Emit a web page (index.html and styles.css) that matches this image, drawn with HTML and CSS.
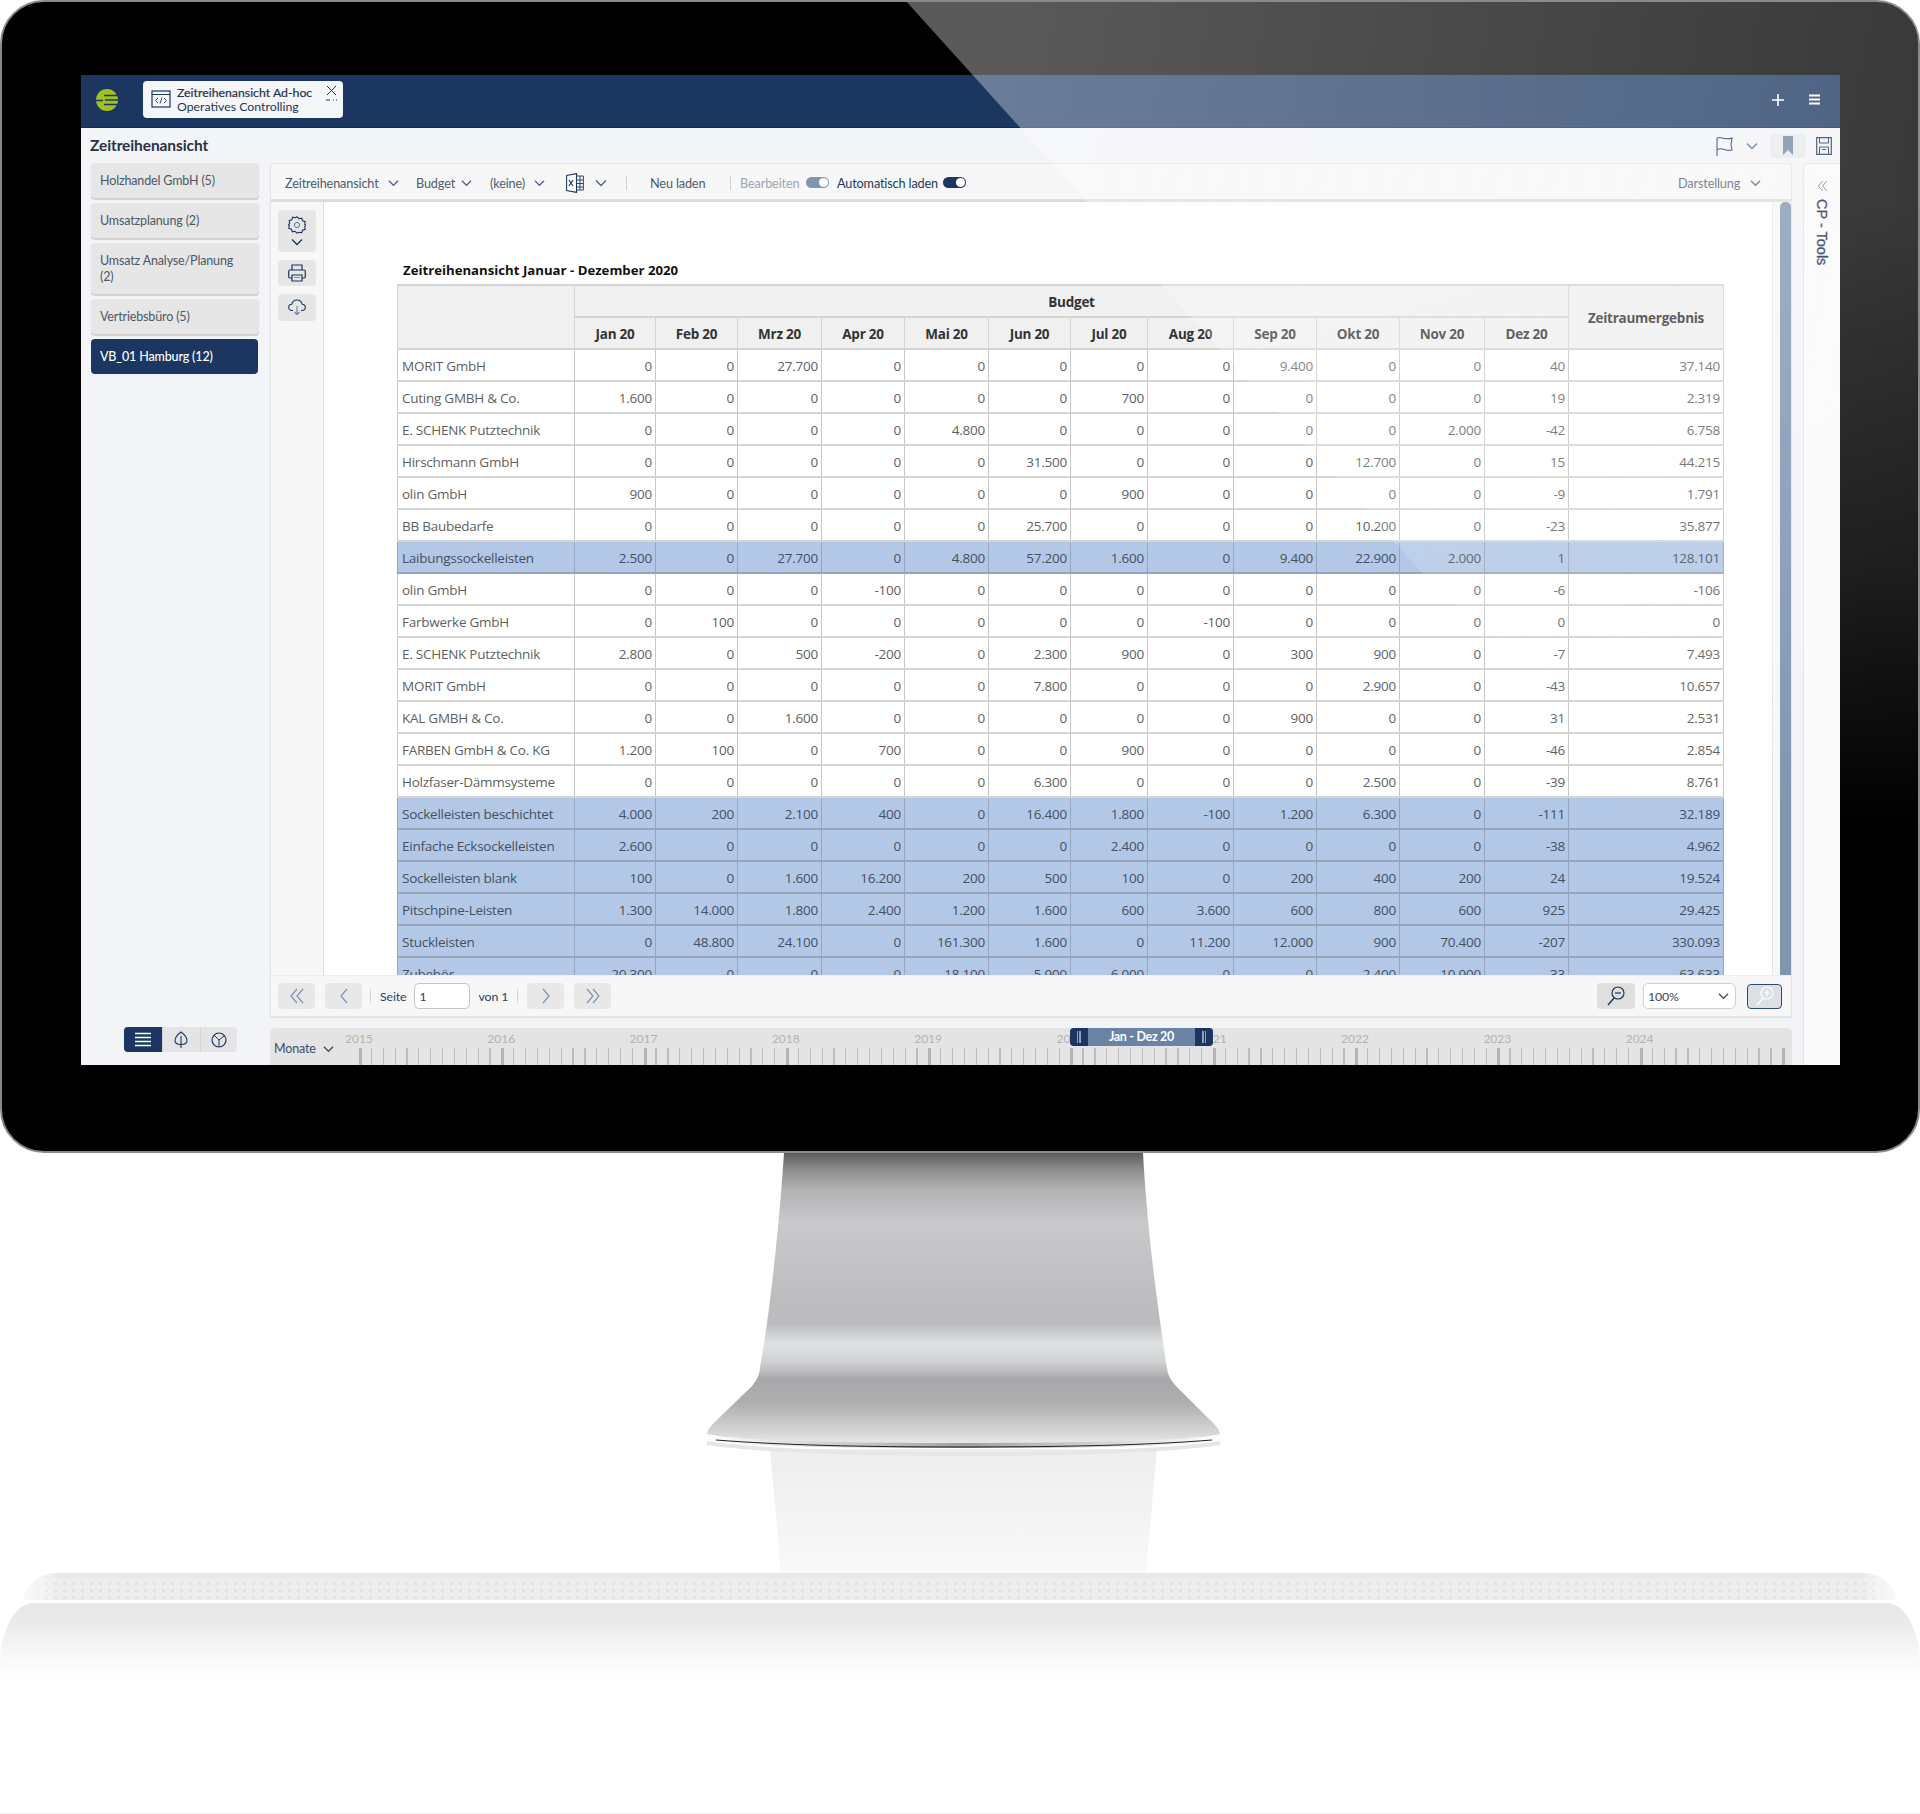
FILE: index.html
```html
<!DOCTYPE html>
<html lang="de">
<head>
    <meta charset="UTF-8">
    <meta name="viewport" content="width=device-width, initial-scale=1.0">
    <title>Zeitreihenansicht</title>
    <link rel="stylesheet" href="styles.css">
</head>
<body>
<svg class="defs" width="0" height="0">
    <symbol id="chev" viewBox="0 0 12 8"><path d="M1 1.500 6 6.500 11 1.500" fill="none" stroke="currentColor" stroke-width="1.300"/></symbol>
    <symbol id="left" viewBox="0 0 10 16"><path d="M8 1 2 8l6 7" fill="none" stroke="currentColor" stroke-width="1.200"/></symbol>
    <symbol id="right" viewBox="0 0 10 16"><path d="M2 1l6 7-6 7" fill="none" stroke="currentColor" stroke-width="1.200"/></symbol>
    <symbol id="dleft" viewBox="0 0 16 16"><path d="M8 1 2 8l6 7M14 1 8 8l6 7" fill="none" stroke="currentColor" stroke-width="1.200"/></symbol>
    <symbol id="dright" viewBox="0 0 16 16"><path d="M2 1l6 7-6 7M8 1l6 7-6 7" fill="none" stroke="currentColor" stroke-width="1.200"/></symbol>
</svg>

<div class="page">
    <div class="monitor">
        <div class="screen">
            <header class="topbar">
                <svg class="logo" width="24" height="24" viewBox="0 0 24 24">
                    <circle cx="12" cy="12" r="11" fill="#a2c31c"/>
                    <path d="M9 7.500H24M1 12.500H8M10 12H24M9 16.500H24" stroke="#1b3660" stroke-width="1.600"/>
                </svg>
                <div class="tab">
                    <svg class="tab-icon" width="20" height="18" viewBox="0 0 20 18">
                        <rect x="1" y="1" width="18" height="16" fill="none" stroke="#1b3660" stroke-width="1.200"/>
                        <path d="M1 4.500H19" stroke="#1b3660" stroke-width="1"/>
                        <path d="M7 8 4.500 10.500 7 13M13 8l2.500 2.500L13 13M11 7.500 9 13.500" fill="none" stroke="#1b3660" stroke-width=".9"/>
                    </svg>
                    <div class="tab-text">
                        <strong>Zeitreihenansicht Ad-hoc</strong>
                        <span>Operatives Controlling</span>
                    </div>
                    <svg class="tab-close" width="11" height="16" viewBox="0 0 11 16">
                        <path d="M1 1l9 9M10 1 1 10" stroke="#1b3660" stroke-width="1"/>
                        <path d="M0 15H4M7 15H8M10 15H11" stroke="#1b3660" stroke-width="1"/>
                    </svg>
                </div>
                <svg class="top-plus" width="12" height="12" viewBox="0 0 12 12"><path d="M6 0V12M0 6H12" stroke="#fff" stroke-width="1.600"/></svg>
                <svg class="top-menu" width="11" height="11" viewBox="0 0 11 11"><path d="M0 1.500H11M0 5.500H11M0 9.500H11" stroke="#fff" stroke-width="2"/></svg>
            </header>

            <div class="workspace">
                <div class="titlebar">
                    <h1>Zeitreihenansicht</h1>
                    <div class="title-actions">
                        <svg class="flag" width="17" height="20" viewBox="0 0 17 20"><path d="M1 20V2C5-.5 8 5 16 2L15 8.500 16 14C9 16 6 10 1 14" fill="none" stroke="#1b3660" stroke-width="1.100"/></svg>
                        <svg class="flag-chev" width="12" height="8"><use href="#chev"/></svg>
                        <div class="mark-btn"><svg width="10" height="19" viewBox="0 0 10 19"><path d="M0 0H10V19L5 14 0 19Z" fill="#6f87a7"/></svg></div>
                        <svg class="save" width="16" height="18" viewBox="0 0 16 18"><path d="M.7.7H15.300V17.300H.7Z" fill="#eef0f4" stroke="#1b3660" stroke-width="1.200"/><path d="M3.500 1V6H12.500V1M3.500 17V10H12.500V17M6 12.500H10" fill="none" stroke="#1b3660" stroke-width="1"/></svg>
                    </div>
                </div>

                <nav class="sidebar">
                    <a class="side-item">Holzhandel GmbH (5)</a>
                    <a class="side-item">Umsatzplanung (2)</a>
                    <a class="side-item side-tall">Umsatz Analyse/Planung (2)</a>
                    <a class="side-item">Vertriebsbüro (5)</a>
                    <a class="side-item active">VB_01 Hamburg (12)</a>
                </nav>

                <main class="panel">
                    <div class="toolbar">
                        <span class="tb-item tb-view">Zeitreihenansicht<svg width="11" height="8"><use href="#chev"/></svg></span>
                        <span class="tb-item tb-budget">Budget<svg width="11" height="8"><use href="#chev"/></svg></span>
                        <span class="tb-item tb-none">(keine)<svg width="11" height="8"><use href="#chev"/></svg></span>
                        <span class="tb-item tb-excel">
                            <svg width="18" height="20" viewBox="0 0 18 20"><path d="M.6 2.500 10.500.6V19.400L.6 17.500Z" fill="#fff" stroke="#1b3660" stroke-width="1.100"/><path d="M3 7l4 6M7 7l-4 6" stroke="#1b3660" stroke-width="1.200"/><path d="M10.500 3H17.400V17H10.500M14 3V17M10.500 7H17M10.500 10.500H17M10.500 14H17" fill="none" stroke="#1b3660" stroke-width=".9"/></svg>
                            <svg width="12" height="8"><use href="#chev"/></svg>
                        </span>
                        <i class="tb-sep sep-a"></i>
                        <span class="tb-item tb-reload">Neu laden</span>
                        <i class="tb-sep sep-b"></i>
                        <span class="tb-item tb-edit">Bearbeiten<b class="toggle off"></b></span>
                        <span class="tb-item tb-auto">Automatisch laden<b class="toggle"></b></span>
                        <span class="tb-item tb-display">Darstellung<svg width="11" height="8"><use href="#chev"/></svg></span>
                    </div>

                    <div class="panel-body">
                        <div class="side-tools">
                            <div class="tool-btn tool-gear">
                                <svg width="18" height="18" viewBox="0 0 18 18"><path d="M9 .8l2 1.900 2.700-.5.9 2.600 2.600.9-.5 2.700L18 9l-1.300 1.600.5 2.700-2.600.9-.9 2.600-2.700-.5L9 17.200l-2-1.900-2.700.5-.9-2.600-2.600-.9.5-2.700L.4 9l1.300-1.600-.5-2.700 2.600-.9.9-2.600 2.700.5Z" fill="none" stroke="#1b3660" stroke-width="1.100"/><circle cx="9" cy="9" r="2.600" fill="none" stroke="#5f7896" stroke-width="1"/></svg>
                                <svg width="12" height="8"><use href="#chev"/></svg>
                            </div>
                            <div class="tool-btn tool-print">
                                <svg width="18" height="18" viewBox="0 0 18 18"><path d="M4 6V1H14V6M4 14H2C1 14 .7 13.500 .7 12.500V7.500C.7 6.500 1 6 2 6H16C17 6 17.300 6.500 17.300 7.500V12.500C17.300 13.500 17 14 16 14H14" fill="none" stroke="#1b3660" stroke-width="1.200"/><path d="M4 11H14V17H4Z" fill="none" stroke="#1b3660" stroke-width="1.200"/><path d="M6 13.500H12" stroke="#7d93b0" stroke-width="1"/></svg>
                            </div>
                            <div class="tool-btn tool-cloud">
                                <svg width="18" height="17" viewBox="0 0 18 17"><path d="M5 11.500H4C2 11.500 .7 10 .7 8.300 .7 6.500 2 5.200 3.800 5.200 4.500 2.500 6.500 1 9 1s4.500 1.500 5.200 4.200C16 5.200 17.300 6.500 17.300 8.300 17.300 10 16 11.500 14 11.500H13" fill="none" stroke="#1b3660" stroke-width="1.100"/><path d="M9 7V15.500M6.500 13 9 15.500 11.500 13" fill="none" stroke="#6b83a5" stroke-width="1.100"/></svg>
                            </div>
                        </div>

                        <div class="report">
                            <h2>Zeitreihenansicht Januar - Dezember 2020</h2>
                            <table class="grid">
                                <colgroup>
                                    <col class="c-name"><col class="c81"><col class="c82"><col class="c84"><col class="c83"><col class="c84"><col class="c82"><col class="c77"><col class="c86"><col class="c83"><col class="c83"><col class="c85"><col class="c84"><col class="c-total">
                                </colgroup>
                                <thead>
                                    <tr><th rowspan="2"></th><th colspan="12">Budget</th><th rowspan="2">Zeitraumergebnis</th></tr>
                                    <tr><th>Jan 20</th><th>Feb 20</th><th>Mrz 20</th><th>Apr 20</th><th>Mai 20</th><th>Jun 20</th><th>Jul 20</th><th>Aug 20</th><th>Sep 20</th><th>Okt 20</th><th>Nov 20</th><th>Dez 20</th></tr>
                                </thead>
                                <tbody>
                                    <tr><td>MORIT GmbH</td><td>0</td><td>0</td><td>27.700</td><td>0</td><td>0</td><td>0</td><td>0</td><td>0</td><td>9.400</td><td>0</td><td>0</td><td>40</td><td>37.140</td></tr>
                                    <tr><td>Cuting GMBH &amp; Co.</td><td>1.600</td><td>0</td><td>0</td><td>0</td><td>0</td><td>0</td><td>700</td><td>0</td><td>0</td><td>0</td><td>0</td><td>19</td><td>2.319</td></tr>
                                    <tr><td>E. SCHENK Putztechnik</td><td>0</td><td>0</td><td>0</td><td>0</td><td>4.800</td><td>0</td><td>0</td><td>0</td><td>0</td><td>0</td><td>2.000</td><td>-42</td><td>6.758</td></tr>
                                    <tr><td>Hirschmann GmbH</td><td>0</td><td>0</td><td>0</td><td>0</td><td>0</td><td>31.500</td><td>0</td><td>0</td><td>0</td><td>12.700</td><td>0</td><td>15</td><td>44.215</td></tr>
                                    <tr><td>olin GmbH</td><td>900</td><td>0</td><td>0</td><td>0</td><td>0</td><td>0</td><td>900</td><td>0</td><td>0</td><td>0</td><td>0</td><td>-9</td><td>1.791</td></tr>
                                    <tr><td>BB Baubedarfe</td><td>0</td><td>0</td><td>0</td><td>0</td><td>0</td><td>25.700</td><td>0</td><td>0</td><td>0</td><td>10.200</td><td>0</td><td>-23</td><td>35.877</td></tr>
                                    <tr class="sum"><td>Laibungssockelleisten</td><td>2.500</td><td>0</td><td>27.700</td><td>0</td><td>4.800</td><td>57.200</td><td>1.600</td><td>0</td><td>9.400</td><td>22.900</td><td>2.000</td><td>1</td><td>128.101</td></tr>
                                    <tr><td>olin GmbH</td><td>0</td><td>0</td><td>0</td><td>-100</td><td>0</td><td>0</td><td>0</td><td>0</td><td>0</td><td>0</td><td>0</td><td>-6</td><td>-106</td></tr>
                                    <tr><td>Farbwerke GmbH</td><td>0</td><td>100</td><td>0</td><td>0</td><td>0</td><td>0</td><td>0</td><td>-100</td><td>0</td><td>0</td><td>0</td><td>0</td><td>0</td></tr>
                                    <tr><td>E. SCHENK Putztechnik</td><td>2.800</td><td>0</td><td>500</td><td>-200</td><td>0</td><td>2.300</td><td>900</td><td>0</td><td>300</td><td>900</td><td>0</td><td>-7</td><td>7.493</td></tr>
                                    <tr><td>MORIT GmbH</td><td>0</td><td>0</td><td>0</td><td>0</td><td>0</td><td>7.800</td><td>0</td><td>0</td><td>0</td><td>2.900</td><td>0</td><td>-43</td><td>10.657</td></tr>
                                    <tr><td>KAL GMBH &amp; Co.</td><td>0</td><td>0</td><td>1.600</td><td>0</td><td>0</td><td>0</td><td>0</td><td>0</td><td>900</td><td>0</td><td>0</td><td>31</td><td>2.531</td></tr>
                                    <tr><td>FARBEN GmbH &amp; Co. KG</td><td>1.200</td><td>100</td><td>0</td><td>700</td><td>0</td><td>0</td><td>900</td><td>0</td><td>0</td><td>0</td><td>0</td><td>-46</td><td>2.854</td></tr>
                                    <tr><td>Holzfaser-Dämmsysteme</td><td>0</td><td>0</td><td>0</td><td>0</td><td>0</td><td>6.300</td><td>0</td><td>0</td><td>0</td><td>2.500</td><td>0</td><td>-39</td><td>8.761</td></tr>
                                    <tr class="sum"><td>Sockelleisten beschichtet</td><td>4.000</td><td>200</td><td>2.100</td><td>400</td><td>0</td><td>16.400</td><td>1.800</td><td>-100</td><td>1.200</td><td>6.300</td><td>0</td><td>-111</td><td>32.189</td></tr>
                                    <tr class="sum"><td>Einfache Ecksockelleisten</td><td>2.600</td><td>0</td><td>0</td><td>0</td><td>0</td><td>0</td><td>2.400</td><td>0</td><td>0</td><td>0</td><td>0</td><td>-38</td><td>4.962</td></tr>
                                    <tr class="sum"><td>Sockelleisten blank</td><td>100</td><td>0</td><td>1.600</td><td>16.200</td><td>200</td><td>500</td><td>100</td><td>0</td><td>200</td><td>400</td><td>200</td><td>24</td><td>19.524</td></tr>
                                    <tr class="sum"><td>Pitschpine-Leisten</td><td>1.300</td><td>14.000</td><td>1.800</td><td>2.400</td><td>1.200</td><td>1.600</td><td>600</td><td>3.600</td><td>600</td><td>800</td><td>600</td><td>925</td><td>29.425</td></tr>
                                    <tr class="sum"><td>Stuckleisten</td><td>0</td><td>48.800</td><td>24.100</td><td>0</td><td>161.300</td><td>1.600</td><td>0</td><td>11.200</td><td>12.000</td><td>900</td><td>70.400</td><td>-207</td><td>330.093</td></tr>
                                    <tr class="sum"><td>Zubehör</td><td>20.300</td><td>0</td><td>0</td><td>0</td><td>18.100</td><td>5.900</td><td>6.000</td><td>0</td><td>0</td><td>2.400</td><td>10.900</td><td>33</td><td>63.633</td></tr>
                                </tbody>
                            </table>
                        </div>
                        <div class="scrollbar"><div class="thumb"></div></div>
                    </div>

                    <div class="pager">
                        <span class="page-btn"><svg width="16" height="16"><use href="#dleft"/></svg></span>
                        <span class="page-btn"><svg width="10" height="16"><use href="#left"/></svg></span>
                        <i class="pg-sep"></i>
                        <span class="pg-label">Seite</span>
                        <input class="pg-input" type="text" value="1">
                        <span class="pg-label">von 1</span>
                        <i class="pg-sep"></i>
                        <span class="page-btn"><svg width="10" height="16"><use href="#right"/></svg></span>
                        <span class="page-btn"><svg width="16" height="16"><use href="#dright"/></svg></span>
                        <span class="zoom-btn">
                            <svg width="18" height="20" viewBox="0 0 18 20"><circle cx="11" cy="7" r="6" fill="none" stroke="#1b3660" stroke-width="1.200"/><path d="M8 7H14" stroke="#1b3660" stroke-width="1.200"/><path d="M7 12 1 19" stroke="#1b3660" stroke-width="1.400"/></svg>
                        </span>
                        <span class="zoom-select">100%<svg width="11" height="8"><use href="#chev"/></svg></span>
                        <span class="zoom-plus">
                            <svg width="18" height="20" viewBox="0 0 18 20"><circle cx="11" cy="7" r="6" fill="none" stroke="#fff" stroke-width="1.200"/><path d="M8 7H14M11 4V10" stroke="#fff" stroke-width="1.200"/><path d="M7 12 1 19" stroke="#fff" stroke-width="1.400"/></svg>
                        </span>
                    </div>
                </main>

                <aside class="cp-tools">
                    <svg width="11" height="14"><use href="#dleft"/></svg>
                    <span>CP - Tools</span>
                </aside>

                <div class="view-switch">
                    <span class="view-btn active">
                        <svg width="16" height="15" viewBox="0 0 16 15"><path d="M0 1.500H16M0 5.500H16M0 9.500H16M0 13.500H16" stroke="#fff" stroke-width="1.700"/></svg>
                    </span>
                    <span class="view-btn">
                        <svg width="14" height="17" viewBox="0 0 14 17"><path d="M7 1C3 4 1 7 1 9.500 1 12 3.500 13.500 7 13.500S13 12 13 9.500C13 7 11 4 7 1Z" fill="none" stroke="#1b3660" stroke-width="1.100"/><path d="M7 5V17" stroke="#1b3660" stroke-width="1.100"/></svg>
                    </span>
                    <span class="view-btn">
                        <svg width="16" height="16" viewBox="0 0 16 16"><circle cx="8" cy="8" r="7" fill="none" stroke="#1b3660" stroke-width="1.200"/><path d="M8 8 3 3M8 8l5-4M8 8V15" stroke="#1b3660" stroke-width="1"/></svg>
                    </span>
                </div>

                <div class="timeline">
                    <div class="tl-unit">Monate<svg width="11" height="8"><use href="#chev"/></svg></div>
                    <div class="tl-scale">
                        <div class="tl-years"><span>2015</span><span>2016</span><span>2017</span><span>2018</span><span>2019</span><span>2020</span><span>2021</span><span>2022</span><span>2023</span><span>2024</span></div>
                        <div class="tl-ticks"></div>
                    </div>
                    <div class="tl-range"><i></i><span>Jan - Dez 20</span><i></i></div>
                </div>
            </div>
        </div>
        <div class="gloss"></div>
    </div>

    <svg class="stand" width="1920" height="420" viewBox="0 0 1920 420">
        <defs>
            <linearGradient id="metal" x1="0" y1="0" x2="0" y2="294" gradientUnits="userSpaceOnUse">
                <stop offset="0" stop-color="#5c5c5c"/>
                <stop offset=".06" stop-color="#8f8f90"/>
                <stop offset=".13" stop-color="#b4b4b6"/>
                <stop offset=".24" stop-color="#c9c9cb"/>
                <stop offset=".5" stop-color="#bdbdc0"/>
                <stop offset=".58" stop-color="#bcbcbf"/>
                <stop offset=".65" stop-color="#dfe2e3"/>
                <stop offset=".71" stop-color="#d0d1d2"/>
                <stop offset=".77" stop-color="#a8a8aa"/>
                <stop offset=".85" stop-color="#aeaeb0"/>
                <stop offset=".95" stop-color="#d6d6d6"/>
                <stop offset="1" stop-color="#eee"/>
            </linearGradient>
            <linearGradient id="rim" x1="707" y1="0" x2="1220" y2="0" gradientUnits="userSpaceOnUse">
                <stop offset="0" stop-color="#fff"/>
                <stop offset=".5" stop-color="#a0a0a0"/>
                <stop offset="1" stop-color="#fff"/>
            </linearGradient>
            <linearGradient id="mirror" x1="0" y1="302" x2="0" y2="420" gradientUnits="userSpaceOnUse">
                <stop offset="0" stop-color="#eeeeee"/>
                <stop offset="1" stop-color="#f9f9f9"/>
            </linearGradient>
        </defs>
        <path d="M770 296H1157L1146 420H781Z" fill="url(#mirror)"/>
        <path d="M707 288C760 296 860 299 964 299S1170 296 1220 288V292C1170 300 1060 303 964 303S760 300 707 292Z" fill="#e6e6e6"/>
        <path d="M784 0H1143C1148 90 1160 170 1167 215 1168 224 1172 228 1176 233L1208 265C1215 272 1220 276 1220 282V286C1200 292 1120 295 964 295 810 295 730 292 707 286V282C707 276 712 272 719 265L752 233C756 228 759 224 760 215 768 170 778 90 784 0Z" fill="url(#metal)"/>
        <path d="M707 281C730 287 830 290 964 290S1200 287 1220 281V286C1200 292 1120 295 964 295 810 295 730 292 707 286Z" fill="url(#rim)"/>
        <path d="M716 287C780 292 860 294 964 294S1150 292 1212 287" fill="none" stroke="#222" stroke-width="1"/>
    </svg>
    <div class="floor-top"></div>
    <div class="floor-low"></div>
</div>
</body>
</html>
```

FILE: styles.css
```css
html, body {
    margin: 0;
    background-color: #fff;
    overflow: hidden;
}

.defs {
    position: absolute;
}

.page {
    width: 1920px;
    height: 1814px;
    box-sizing: border-box;
    border-bottom: 1px solid #f0f0f0;
    font-family: 'Lato', sans-serif;
    color: #4a5a6c;
}

/* monitor body */
.monitor {
    position: relative;
    height: 1153px;
    box-sizing: border-box;
    padding: 73px 78px 86px 79px;
    background-color: #000;
    border: 2px solid #8a8a8a;
    border-radius: 44px;
    overflow: hidden;
}

.screen {
    height: 990px;
    display: flex;
    flex-direction: column;
    background-color: #f3f4f8;
}

/* light reflection over the top right of the monitor */
.gloss {
    position: absolute;
    inset: -2px;
    pointer-events: none;
    background: linear-gradient(100deg, rgba(255, 255, 255, 0.35) 48%, rgba(255, 255, 255, 0.2) 100%);
    clip-path: polygon(905px 0, 1920px 0, 1920px 1125px);
    -webkit-mask-image: linear-gradient(to bottom, #000 200px, rgba(0, 0, 0, 0.55) 560px, transparent 830px);
    mask-image: linear-gradient(to bottom, #000 200px, rgba(0, 0, 0, 0.55) 560px, transparent 830px);
}

/* top bar */
.topbar {
    height: 53px;
    flex: none;
    display: flex;
    align-items: center;
    background-color: #1b3660;
    border-bottom: 1px solid #16294a;
    box-sizing: border-box;
}

.logo {
    margin: -3px 0 0 14px;
}

.tab {
    margin-left: 24px;
    width: 200px;
    height: 37px;
    margin-top: -4px;
    box-sizing: border-box;
    display: flex;
    align-items: center;
    background-color: #f5f6f8;
    border-radius: 4px;
    position: relative;
}

.tab-icon {
    margin-left: 8px;
    flex: none;
}

.tab-text {
    margin-left: 6px;
    padding-top: 2px;
    display: flex;
    flex-direction: column;
    font-size: 12.3px;
    line-height: 14px;
    color: #1b3660;
}

.tab-text strong {
    font-weight: 400;
    color: #22334e;
    -webkit-text-stroke: 0.2px #22334e;
}

.tab-close {
    position: absolute;
    right: 6px;
    top: 4px;
}

.top-plus {
    margin: -3px 0 0 auto;
}

.top-menu {
    margin: -3px 20px 0 25px;
}

/* workspace */
.workspace {
    flex: 1;
    display: grid;
    grid-template-columns: 189px 1522px 11px 37px;
    grid-template-rows: 35px 854px 48px;
    min-height: 0;
}

.titlebar {
    grid-column: 1 / 5;
    display: flex;
    align-items: center;
    padding-left: 9px;
    background-color: #f3f4f8;
}

h1 {
    margin: -2px 0 0 0;
    font-size: 15.500px;
    font-weight: 700;
    color: #2a3340;
    letter-spacing: -0.1px;
}

.title-actions {
    margin-left: auto;
    display: flex;
    align-items: center;
}

.flag-chev {
    margin-left: 13px;
    color: #4c6583;
}

.mark-btn {
    margin-left: 12px;
    width: 36px;
    height: 24px;
    display: flex;
    align-items: center;
    justify-content: center;
    background-color: #e8e9ec;
    border-radius: 4px;
}

.save {
    margin-left: 10px;
    margin-right: 8px;
}

/* sidebar */
.sidebar {
    padding-left: 10px;
    width: 168px;
    display: flex;
    flex-direction: column;
    gap: 5px;
}

.side-item {
    height: 35px;
    box-sizing: border-box;
    padding: 0 9px;
    display: flex;
    align-items: center;
    font-size: 12.5px;
    line-height: 16px;
    color: #4b5866;
    letter-spacing: -0.15px;
    background-color: #e6e6e6;
    border-radius: 4px;
    box-shadow: 0 2px 1px #cfcfcf;
}

.side-tall {
    height: 51px;
    padding-right: 20px;
}

.side-item.active {
    background-color: #1b3660;
    color: #fff;
    font-weight: 500;
    box-shadow: none;
    margin-right: 1px;
}

/* panel */
.panel {
    display: flex;
    flex-direction: column;
    border: 1px solid #e3e4e6;
    border-radius: 4px 4px 0 0;
    background-color: #f7f7f7;
    box-shadow: 0 1px 1px #ddd;
    min-height: 0;
}

.toolbar {
    height: 38px;
    flex: none;
    display: flex;
    align-items: center;
    box-sizing: border-box;
    border-bottom: 3px solid #dcdcdc;
    padding: 2px 30px 0 14px;
    font-size: 12.700px;
    color: #4c5c6e;
    letter-spacing: -0.15px;
}

.tb-item {
    display: flex;
    align-items: center;
    justify-content: space-between;
    white-space: nowrap;
}

.tb-item svg {
    color: #4c6583;
}

.tb-view { width: 114px; }
.tb-budget { width: 56px; margin-left: 17px; }
.tb-none { width: 55px; margin-left: 18px; }
.tb-excel { width: 41px; margin-left: 21px; }
.tb-sep { width: 1px; height: 14px; background-color: #cfd2d6; }
.sep-a { margin-left: 19px; }
.tb-reload { margin-left: 23px; width: 56px; }
.sep-b { margin-left: 24px; }
.tb-edit { width: 89px; margin-left: 9px; color: #9aa6b4; }
.tb-auto { width: 129px; margin-left: 8px; color: #243a5a; }
.tb-display { width: 83px; margin-left: auto; }

.toggle {
    width: 23px;
    height: 11px;
    box-sizing: border-box;
    border-radius: 6px;
    background-color: #1b3660;
    position: relative;
    display: block;
}

.toggle::after {
    content: "";
    position: absolute;
    right: 1px;
    top: 1px;
    width: 9px;
    height: 9px;
    border-radius: 50%;
    background-color: #fff;
}

.toggle.off {
    background-color: #7f95b0;
}

.panel-body {
    flex: 1;
    display: flex;
    min-height: 0;
}

.side-tools {
    width: 53px;
    flex: none;
    box-sizing: border-box;
    padding: 8px 0 0 7px;
    border-right: 1px solid #dfdfdf;
    display: flex;
    flex-direction: column;
    gap: 8px;
}

.tool-btn {
    width: 38px;
    display: flex;
    flex-direction: column;
    align-items: center;
    justify-content: center;
    gap: 4px;
    background-color: #e6e6e6;
    border-radius: 4px;
    color: #1b3660;
}

.tool-gear { height: 42px; }
.tool-print { height: 26px; }
.tool-cloud { height: 27px; }

.report {
    width: 1449px;
    flex: none;
    box-sizing: border-box;
    padding: 59px 0 0 73px;
    background-color: #fff;
    border-right: 1px solid #e6e6e6;
    overflow: hidden;
    font-family: 'Open Sans', sans-serif;
}

h2 {
    margin: 0 0 4px 6px;
    font-size: 13.200px;
    line-height: 19px;
    font-weight: 700;
    color: #111;
}

.grid {
    width: 1326px;
    table-layout: fixed;
    border-collapse: collapse;
    font-size: 13.500px;
    letter-spacing: -0.25px;
    color: #5f5f5f;
}

.c-name { width: 177px; }
.c81 { width: 81px; }
.c82 { width: 82px; }
.c83 { width: 83px; }
.c84 { width: 84px; }
.c85 { width: 85px; }
.c86 { width: 86px; }
.c77 { width: 77px; }
.c-total { width: 155px; }

.grid th {
    height: 32px;
    box-sizing: border-box;
    padding: 2px 0 0;
    background-color: #f0f0f0;
    border: 2px solid #d4d4d4;
    border-width: 2px 1.500px;
    font-weight: 700;
    color: #333;
    text-align: center;
}

.grid td {
    height: 32px;
    padding: 2px 3px 0 0;
    box-sizing: border-box;
    border: 1.500px solid #c6c6c6;
    border-bottom: 2px solid #d4d4d4;
    text-align: right;
    white-space: nowrap;
}

.grid td:first-child {
    text-align: left;
    padding: 2px 0 0 4px;
}

.grid .sum td {
    background-color: #b3c8e6;
    border-color: #97a5ba;
    color: #44505f;
}

.scrollbar {
    flex: 1;
    padding: 0 0 0 7px;
}

.thumb {
    height: 100%;
    width: 11px;
    border-radius: 5px 5px 0 0;
    background-color: #7f95b0;
}

/* pager */
.pager {
    height: 41px;
    flex: none;
    display: flex;
    align-items: center;
    padding-left: 7px;
    border-top: 1px solid #eee;
    box-sizing: border-box;
    font-size: 12.300px;
    color: #2c405c;
    letter-spacing: -0.1px;
}

.page-btn {
    width: 37px;
    height: 26px;
    margin-right: 10px;
    display: flex;
    align-items: center;
    justify-content: center;
    background-color: #e8e8e8;
    border-radius: 4px;
    color: #7d93b0;
}

.pg-sep {
    width: 1px;
    height: 14px;
    background-color: #cfd2d6;
    margin: 0 9px 0 -2px;
}

.pg-input {
    width: 56px;
    height: 26px;
    box-sizing: border-box;
    margin: 0 8px 0 8px;
    padding: 0 4px;
    border: 1px solid #c4c4c4;
    border-radius: 5px;
    background-color: #fff;
    font-family: inherit;
    font-size: 12px;
    color: #2c405c;
}

.pg-label + .pg-sep {
    margin-left: 9px;
}

.zoom-btn {
    margin-left: auto;
    width: 38px;
    height: 26px;
    display: flex;
    align-items: center;
    justify-content: center;
    background-color: #dfdfdf;
    border-radius: 4px;
}

.zoom-select {
    margin-left: 8px;
    width: 93px;
    height: 26px;
    box-sizing: border-box;
    padding: 0 6px 0 4px;
    display: flex;
    align-items: center;
    justify-content: space-between;
    background-color: #fff;
    border: 1px solid #d0d0d0;
    border-radius: 5px;
    color: #3a4a5e;
}

.zoom-plus {
    margin: 0 9px 0 11px;
    width: 35px;
    height: 25px;
    box-sizing: border-box;
    display: flex;
    align-items: center;
    justify-content: center;
    background-color: #dcdfe4;
    border: 1.500px solid #2c4a74;
    border-radius: 4px;
}

/* right tools */
.cp-tools {
    grid-column: 4;
    grid-row: 2 / 4;
    display: flex;
    flex-direction: column;
    align-items: center;
    gap: 6px;
    padding-top: 15px;
    background-color: #fafafb;
    border-left: 1px solid #e3e4e6;
    border-top: 1px solid #e3e4e6;
    border-radius: 4px 0 0 0;
    color: #4c6583;
}

.cp-tools span {
    writing-mode: vertical-rl;
    font-family: 'Liberation Sans', sans-serif;
    font-size: 14.500px;
    color: #12284c;
    -webkit-text-stroke: 0.3px #12284c;
}

/* bottom row */
.view-switch {
    grid-column: 1;
    grid-row: 3;
    align-self: start;
    margin: 10px 0 0 43px;
    width: 113px;
    height: 25px;
    display: flex;
    border-radius: 4px;
    background-color: #e4e4e4;
    overflow: hidden;
}

.view-btn {
    flex: 1;
    display: flex;
    align-items: center;
    justify-content: center;
    border-left: 1px solid #d4d4d4;
}

.view-btn.active {
    flex: none;
    width: 38px;
    border-left: 0;
    background-color: #1b3660;
}

.timeline {
    grid-column: 2 / 3;
    grid-row: 3;
    position: relative;
    margin-top: 11px;
    display: flex;
    background-color: #e4e4e4;
    border-radius: 5px 5px 0 0;
    overflow: hidden;
}

.tl-unit {
    width: 75px;
    padding: 13px 0 0 4px;
    box-sizing: border-box;
    flex: none;
    display: flex;
    align-items: center;
    align-self: flex-start;
    gap: 7px;
    font-size: 12.5px;
    line-height: 16px;
    letter-spacing: -0.15px;
    color: #3c4e64;
}

.tl-scale {
    flex: 1;
    min-width: 0;
}

.tl-years {
    display: flex;
    height: 20px;
    align-items: center;
    font-size: 12px;
    color: #b2b2b2;
}

.tl-years span {
    flex: none;
    width: 142.300px;
}

.tl-ticks {
    margin-left: 14px;
    margin-right: 0;
    height: 17px;
    background-image:
        repeating-linear-gradient(to right, #b4b4b4 0, #b4b4b4 3px, transparent 3px, transparent 142.300px),
        repeating-linear-gradient(to right, #bcbcbc 0, #bcbcbc 1.200px, transparent 1.200px, transparent 11.860px);
}

.tl-range {
    position: absolute;
    left: 800px;
    top: 0;
    width: 143px;
    height: 18px;
    display: flex;
    border-radius: 4px;
    overflow: hidden;
    background-color: #6b83a5;
    color: #fff;
    font-size: 12.5px;
    font-weight: 700;
    letter-spacing: -0.3px;
}

.tl-range i {
    flex: none;
    width: 18px;
    background: linear-gradient(to right, transparent 7px, #8fa1b9 7px, #8fa1b9 8.500px, transparent 8.500px, transparent 9.500px, #8fa1b9 9.500px, #8fa1b9 11px, transparent 11px) center / 100% 12px no-repeat, #1b3660;
}

.tl-range span {
    flex: 1;
    text-align: center;
    line-height: 18px;
}

/* stand and floor reflection */
.stand {
    display: block;
}

.floor-top {
    height: 27px;
    margin: 0 24px;
    border-radius: 34px 34px 0 0 / 27px 27px 0 0;
    background-color: #ededed;
    background-image:
        linear-gradient(to right, #fafafa 0, rgba(250, 250, 250, 0) 36px, rgba(250, 250, 250, 0) calc(100% - 36px), #fafafa 100%),
        linear-gradient(to bottom, #e8e8e8 0, #e8e8e8 5px, rgba(232, 232, 232, 0) 5px),
        radial-gradient(circle, #e2e2e2 1.500px, transparent 1.700px);
    background-size: auto, auto, 9px 7px;
}

.floor-low {
    height: 74px;
    margin-top: 3px;
    border-radius: 34px 34px 0 0 / 60px 60px 0 0;
    background: linear-gradient(to bottom, #e7e7e7 0, #eaeaea 25%, #f4f4f4 55%, #fff 100%);
}
```
